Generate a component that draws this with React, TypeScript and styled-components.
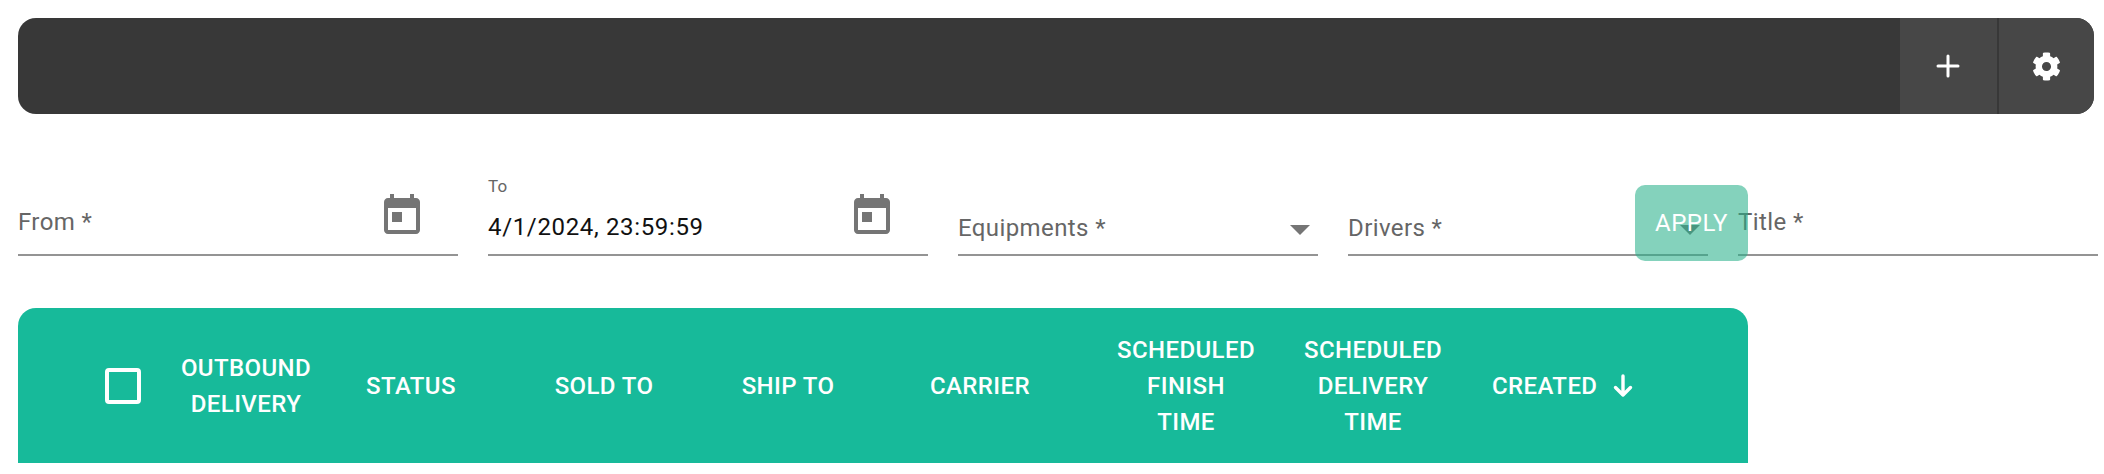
import styled, { createGlobalStyle } from "styled-components";
import { FaCog } from "react-icons/fa";

const columns = [
  { lines: ["OUTBOUND", "DELIVERY"], width: 162 },
  { lines: ["STATUS"], width: 168 },
  { lines: ["SOLD TO"], width: 218 },
  { lines: ["SHIP TO"], width: 150 },
  { lines: ["CARRIER"], width: 234 },
  { lines: ["SCHEDULED", "FINISH", "TIME"], width: 178 },
  { lines: ["SCHEDULED", "DELIVERY", "TIME"], width: 196 },
];

function CalendarIcon() {
  return (
    <Calendar viewBox="0 0 24 24" fill="#757575">
      <path d="M19 3h-1V1h-2v2H8V1H6v2H5c-1.11 0-1.99.9-1.99 2L3 19c0 1.1.89 2 2 2h14c1.1 0 2-.9 2-2V5c0-1.1-.9-2-2-2zm0 16H5V8h14v11zM7 10h5v5H7z" />
    </Calendar>
  );
}

function DropArrow() {
  return (
    <Arrow viewBox="7 10 10 5" fill="#757575">
      <path d="M7 10l5 5 5-5z" />
    </Arrow>
  );
}

function App() {
  return (
    <Page>
      <GlobalStyle />
      <Toolbar>
        <ToolButton>
          <PlusIcon width="24" height="24" viewBox="0 0 24 24" fill="none" stroke="#fff" strokeWidth="3" strokeLinecap="round">
            <path d="M12 2v20M2 12h20" />
          </PlusIcon>
        </ToolButton>
        <ToolButton>
          <FaCog size={29} color="#fff" />
        </ToolButton>
      </Toolbar>

      <Filters>
        <Field $width={440}>
          <Control>
            <Placeholder $pad={18}>From *</Placeholder>
            <CalendarIcon />
          </Control>
        </Field>
        <Field $width={440}>
          <SmallLabel>To</SmallLabel>
          <Control>
            <Value>4/1/2024, 23:59:59</Value>
            <CalendarIcon />
          </Control>
        </Field>
        <Field $width={360}>
          <Control>
            <Placeholder $pad={12}>Equipments *</Placeholder>
            <DropArrow />
          </Control>
        </Field>
        <Field $width={360}>
          <Control>
            <Placeholder $pad={12}>Drivers *</Placeholder>
            <DropArrow />
          </Control>
        </Field>
        <Field $width={360}>
          <Control>
            <Placeholder $pad={18}>Title *</Placeholder>
          </Control>
        </Field>
        <ApplyButton>APPLY</ApplyButton>
      </Filters>

      <TableHead>
        <Checkbox />
        {columns.map((col, i) => (
          <HeadCell key={i} $width={col.width}>
            {col.lines.map((line) => (
              <div key={line}>{line}</div>
            ))}
          </HeadCell>
        ))}
        <SortCell>
          CREATED
          <svg width="20" height="24" viewBox="0 0 20 24" fill="none" stroke="#fff" strokeWidth="3.4" strokeLinecap="round" strokeLinejoin="round">
            <path d="M10 2v19M2.500 13.500 10 21l7.500-7.500" />
          </svg>
        </SortCell>
      </TableHead>
    </Page>
  );
}

const GlobalStyle = createGlobalStyle`
  html, body {
    margin: 0;
    background: #fff;
    overflow: hidden;
  }
  * {
    box-sizing: border-box;
  }
`;

const Page = styled.div`
  width: 2104px;
  height: 474px;
  padding: 18px 0 0 18px;
  font-family: Roboto, "Liberation Sans", sans-serif;
`;

const Toolbar = styled.div`
  width: 2076px;
  height: 96px;
  display: flex;
  justify-content: flex-end;
  background-color: #383838;
  border-radius: 18px;
  overflow: hidden;
`;

const ToolButton = styled.div`
  width: 97px;
  display: flex;
  align-items: center;
  justify-content: center;
  background-color: #474747;
  & + & {
    border-left: 2px solid #383838;
  }
`;

const PlusIcon = styled.svg`
  margin-right: 2px;
`;

const Filters = styled.div`
  position: relative;
  display: flex;
  align-items: flex-end;
  gap: 30px;
  height: 80px;
  margin-top: 62px;
`;

const Field = styled.div<{ $width: number }>`
  width: ${(p) => p.$width}px;
  flex-shrink: 0;
  display: flex;
  flex-direction: column;
  border-bottom: 2px solid #949494;
`;

const Control = styled.div`
  height: 58px;
  display: flex;
  justify-content: space-between;
  align-items: flex-end;
`;

const SmallLabel = styled.div`
  height: 20px;
  line-height: 20px;
  font-size: 17px;
  letter-spacing: 0.3px;
  color: #666;
`;

const Placeholder = styled.div<{ $pad: number }>`
  line-height: 28px;
  padding-bottom: ${(p) => p.$pad}px;
  font-size: 24px;
  letter-spacing: 0.4px;
  color: #666;
`;

const Value = styled.div`
  line-height: 28px;
  padding-bottom: 13px;
  font-size: 24px;
  letter-spacing: 0.65px;
  color: #111;
`;

const Calendar = styled.svg`
  width: 48px;
  height: 48px;
  margin: 0 32px 14px 0;
`;

const Arrow = styled.svg`
  width: 20px;
  height: 10px;
  margin: 0 8px 19px 0;
`;

const ApplyButton = styled.div`
  position: absolute;
  left: 1617px;
  top: 9px;
  width: 113px;
  height: 76px;
  display: flex;
  align-items: center;
  justify-content: center;
  border-radius: 10px;
  background-color: rgba(38, 175, 137, 0.57);
  color: #fff;
  font-size: 24px;
  letter-spacing: 0.5px;
`;

const TableHead = styled.div`
  width: 1730px;
  height: 155px;
  margin-top: 52px;
  padding-left: 87px;
  display: flex;
  align-items: center;
  background-color: #17ba9a;
  border-radius: 18px 18px 0 0;
  color: #fff;
  font-size: 24px;
  font-weight: 500;
  letter-spacing: 0.4px;
  line-height: 36px;
`;

const Checkbox = styled.div`
  width: 36px;
  height: 36px;
  margin-right: 24px;
  flex-shrink: 0;
  border: 4px solid #fff;
  border-radius: 4px;
`;

const HeadCell = styled.div<{ $width: number }>`
  width: ${(p) => p.$width}px;
  flex-shrink: 0;
  text-align: center;
`;

const SortCell = styled.div`
  margin-left: 21px;
  display: flex;
  align-items: center;
  gap: 16px;
`;

export default App;
